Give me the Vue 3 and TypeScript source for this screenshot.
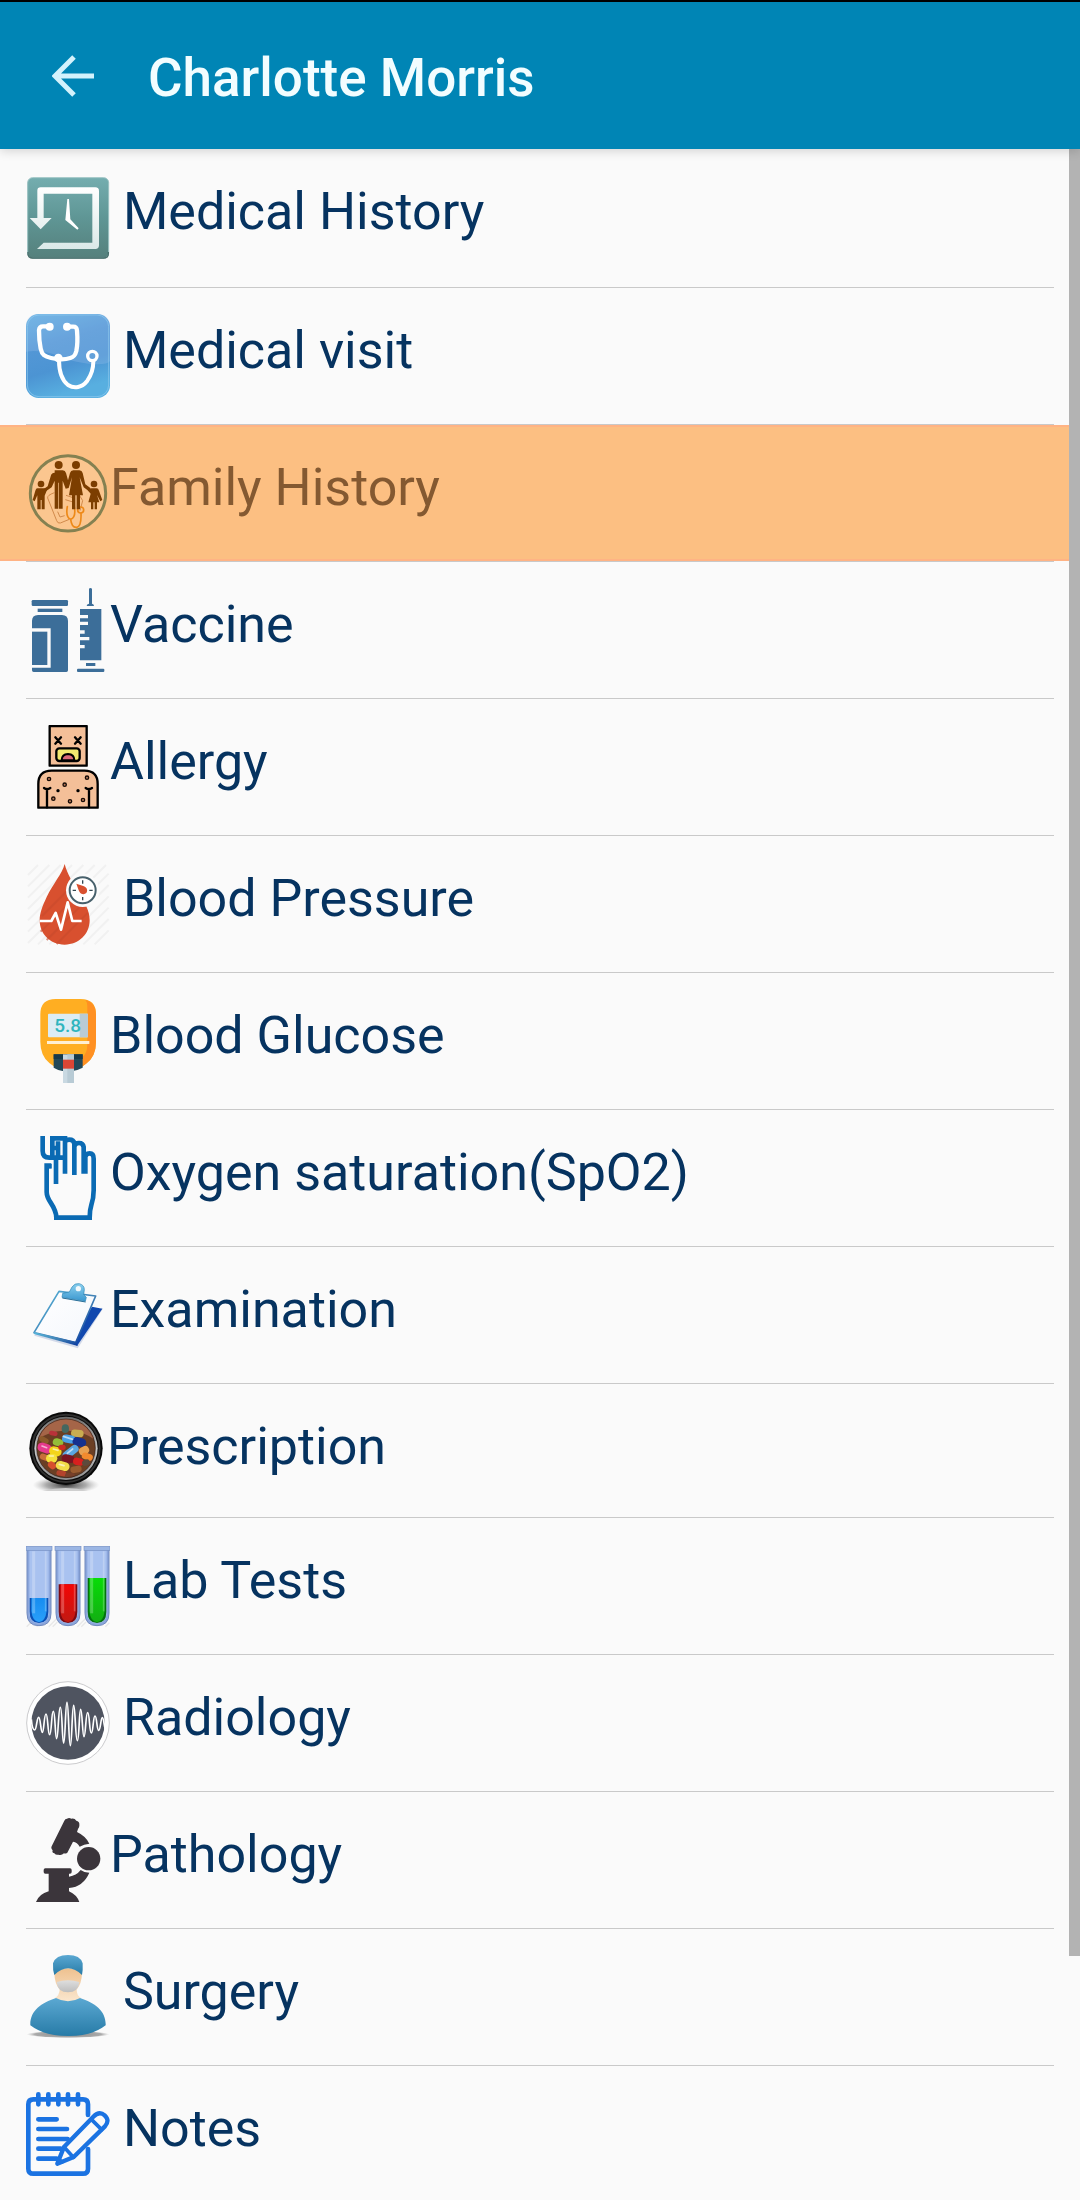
<script setup lang="ts">
import { ref } from 'vue'

interface Section {
  id: string
  label: string
  spaced: boolean
}

const patient = 'Charlotte Morris'

const sections: Section[] = [
  { id: 'history', label: 'Medical History', spaced: true },
  { id: 'visit', label: 'Medical visit', spaced: true },
  { id: 'family', label: 'Family History', spaced: false },
  { id: 'vaccine', label: 'Vaccine', spaced: false },
  { id: 'allergy', label: 'Allergy', spaced: false },
  { id: 'pressure', label: 'Blood Pressure', spaced: true },
  { id: 'glucose', label: 'Blood Glucose', spaced: false },
  { id: 'oxygen', label: 'Oxygen saturation(SpO2)', spaced: false },
  { id: 'exam', label: 'Examination', spaced: false },
  { id: 'prescription', label: 'Prescription', spaced: false },
  { id: 'lab', label: 'Lab Tests', spaced: true },
  { id: 'radiology', label: 'Radiology', spaced: true },
  { id: 'pathology', label: 'Pathology', spaced: false },
  { id: 'surgery', label: 'Surgery', spaced: true },
  { id: 'notes', label: 'Notes', spaced: true }
]

const selected = ref('family')

const tubes = [
  { x: 78, level: 264, fill: 'url(#tube-blue)', dark: '#0b50b4' },
  { x: 165, level: 223, fill: 'url(#tube-red)', dark: '#7d0a12' },
  { x: 252, level: 204, fill: 'url(#tube-green)', dark: '#04700f' }
]

const pills = [
  { x: 160, y: 580, w: 26, h: 14, r: 10, c: '#b8323a' },
  { x: 232, y: 580, w: 38, h: 22, r: 5, c: '#c9ad50' },
  { x: 132, y: 600, w: 30, h: 16, r: 30, c: '#8d5a2c' },
  { x: 196, y: 566, w: 22, h: 26, r: 0, c: '#45675f' },
  { x: 174, y: 607, w: 32, h: 22, r: 15, c: '#93bd3a' },
  { x: 206, y: 597, w: 40, h: 24, r: 10, c: '#4aa0e6' },
  { x: 238, y: 606, w: 42, h: 26, r: 14, c: '#15318f' },
  { x: 134, y: 624, w: 44, h: 28, r: 18, c: '#e63b8d' },
  { x: 166, y: 634, w: 38, h: 28, r: 15, c: '#f3d51c' },
  { x: 252, y: 632, w: 32, h: 24, r: -30, c: '#e8a050' },
  { x: 262, y: 650, w: 34, h: 20, r: 20, c: '#f28a2e' },
  { x: 186, y: 622, w: 22, h: 16, r: 0, c: '#cb2c25' },
  { x: 212, y: 636, w: 54, h: 24, r: -38, c: '#5ba7e2' },
  { x: 134, y: 652, w: 30, h: 18, r: 20, c: '#c8703a' },
  { x: 155, y: 655, w: 34, h: 26, r: 0, c: '#f4e23c' },
  { x: 204, y: 656, w: 38, h: 24, r: 10, c: '#7c1522' },
  { x: 235, y: 665, w: 32, h: 22, r: 12, c: '#d8201e' },
  { x: 258, y: 668, w: 24, h: 18, r: -20, c: '#5d4a3c' },
  { x: 156, y: 676, w: 26, h: 20, r: 40, c: '#d8502d' },
  { x: 188, y: 678, w: 42, h: 26, r: 15, c: '#f2dc4a' },
  { x: 228, y: 688, w: 34, h: 20, r: -10, c: '#9a5c30' },
  { x: 184, y: 700, w: 30, h: 16, r: 10, c: '#b3432c' },
  { x: 210, y: 706, w: 30, h: 14, r: 0, c: '#77402a' }
]

const rashRings = [
  [147, 237], [261, 233], [194, 254], [160, 296], [210, 304], [249, 300]
]
</script>

<template>
  <div class="screen">
    <header class="bar">
      <button class="back" type="button" aria-label="Back">
        <svg class="back-icon" viewBox="0 0 42 42" aria-hidden="true">
          <path d="M22 2 3 21l19 19M4 21h38" fill="none" stroke="#d3f2fc" stroke-width="5" />
        </svg>
      </button>
      <h1 class="title">{{ patient }}</h1>
    </header>

    <main class="body">
      <ul class="list">
        <li v-for="s in sections" :key="s.id" class="item">
          <button
            type="button"
            class="row"
            :class="{ active: selected === s.id }"
            @click="selected = s.id"
          >
            <svg v-if="s.id === 'history'" class="icon" viewBox="78 45 252 252" aria-hidden="true">
              <defs>
                <linearGradient id="hist-bg" x1="0" y1="0" x2="0" y2="1">
                  <stop offset="0" stop-color="#74adaf" />
                  <stop offset=".5" stop-color="#5f9695" />
                  <stop offset="1" stop-color="#55807c" />
                </linearGradient>
                <linearGradient id="hist-line" x1="0" y1="0" x2="0" y2="1">
                  <stop offset="0" stop-color="#fff" />
                  <stop offset="1" stop-color="#dbe9e8" />
                </linearGradient>
              </defs>
              <rect x="82" y="56" width="245" height="241" rx="16" fill="#9aa5a4" />
              <rect x="83" y="53" width="243" height="241" rx="15" fill="url(#hist-bg)" stroke="#9fc6c7" stroke-width="3" />
              <path d="M84 276v4q0 14 14 14h213q14 0 14-14v-4" fill="none" stroke="#4a706d" stroke-width="4" />
              <path d="M112 174V92q0-10 10-10h164q11 0 11 11v163q0 11-11 11H111l20-19h146V101H131v73h24l-33 34-33-34z" fill="url(#hist-line)" />
              <path d="M202 117h5l4 61 25 27-4 4-36-29z" fill="#fff" />
            </svg>

            <svg v-else-if="s.id === 'visit'" class="icon" viewBox="78 462 252 252" aria-hidden="true">
              <defs>
                <linearGradient id="visit-bg" x1="0" y1="0" x2=".3" y2="1">
                  <stop offset="0" stop-color="#64b1e2" />
                  <stop offset=".4" stop-color="#5397d6" />
                  <stop offset=".7" stop-color="#4c94d3" />
                  <stop offset="1" stop-color="#58afe0" />
                </linearGradient>
              </defs>
              <rect x="78" y="462" width="252" height="252" rx="38" fill="url(#visit-bg)" />
              <path d="M78 575V500q0-38 38-38h176q38 0 38 38v104q-10 12-60 8-60-8-95-24-50-20-97-13z" fill="#a8c8ee" opacity=".25" />
              <rect x="82" y="465" width="244" height="245" rx="35" fill="none" stroke="#8fcaf0" stroke-width="3" opacity=".7" />
              <g fill="none" stroke="#fff" stroke-width="13" stroke-linecap="round" stroke-linejoin="round">
                <path d="M148 499h-19q-11 0-12 12c0 27 2 41 5 55 4 19 12 24 31 28 26 6 40 6 58 0 12-4 15-9 18-21 4-18 4-36 2-61-1-10-4-12-11-12h-16" />
                <path d="M177 600c0 35 8 60 27 75 19 12 42 8 58-13 13-18 18-32 18-58" stroke-width="12" />
                <circle cx="277" cy="588" r="14" stroke-width="10" />
              </g>
              <circle cx="149" cy="500" r="12" fill="#fff" />
              <circle cx="201" cy="500" r="12" fill="#fff" />
              <circle cx="175" cy="594" r="13" fill="#fff" />
            </svg>

            <svg v-else-if="s.id === 'family'" class="icon" viewBox="78 93 252 252" aria-hidden="true">
              <circle cx="204" cy="220" r="113" fill="#fbc68f" stroke="#858151" stroke-width="9" />
              <g fill="none" stroke="#d18a4c" stroke-width="3" stroke-linejoin="round">
                <path d="M163 218q-22 8-20 16l27 68q3 9 11 7l27-11M173 275l7 16 14-4M198 226l24 8M196 239l23 7M236 222l12 20-8 30" />
              </g>
              <g fill="none" stroke="#ed8918" stroke-width="5" stroke-linecap="round">
                <path d="M202 260c-4 22 0 34 10 38 12-4 14-20 11-37M212 298c2 16 8 25 18 24 12-2 14-18 13-42" />
                <circle cx="242" cy="270" r="9" />
              </g>
              <g fill="#7c3e00">
                <circle cx="176" cy="135" r="12" />
                <circle cx="228" cy="135" r="12" />
                <circle cx="123" cy="192" r="10" />
                <circle cx="282" cy="192" r="10" />
                <path d="M164 151h24q8 0 10 8l6 22 6-22q2-8 10-8h18q8 0 10 8l8 34 15 11 3 7-5 4-18-13-12-30 10 54h-9v42h-10v-42h-4v42h-10v-42h-9l9-54-10 32-9 2-9-24v84h-11v-78h-2v78h-11v-84l-9 20-24 16-5-7 17-12 10-33q2-8 11-8z" />
                <path d="M112 205h22q4 0 7 5l-7 17v41h-9v-28h-3v28h-10v-42l-8 18-6-4 8-28q2-7 6-7zM274 205h16q5 0 7 7l10 28-6 4-10-19 7 22h-7v21h-7v-21h-4v21h-7v-21h-8l7-26-9-10z" />
              </g>
            </svg>

            <svg v-else-if="s.id === 'vaccine'" class="icon" viewBox="78 504 252 252" aria-hidden="true">
              <g fill="#3c6e99">
                <rect x="95" y="540" width="109" height="18" rx="4" />
                <rect x="113" y="566" width="74" height="10" />
                <path d="M96 625v-22q0-18 18-18h72q18 0 18 18v148q0 5-5 5h-98q-5 0-5-5v-8h56V625z" />
                <path d="M96 635h46v100H96z" />
                <path d="M267 506q4-4 9 0v45q6 1 6 7h-22q0-6 7-7z" />
                <path d="M240 567h64v154h-64v-36h14v-10h-14v-14h28v-10h-28v-10h14v-10h-14v-16h24v-10h-24v-10h24v-10h-24z" />
                <rect x="258" y="729" width="28" height="9" />
                <rect x="231" y="746" width="82" height="10" rx="3" />
              </g>
            </svg>

            <svg v-else-if="s.id === 'allergy'" class="icon" viewBox="78 75 252 252" aria-hidden="true">
              <g fill="#f4bf98" stroke="#000" stroke-width="7" stroke-linejoin="round">
                <path d="M149 78h111v119H149z" />
                <path d="M115 323v-71q0-40 40-40h98q40 0 40 40v71z" />
              </g>
              <g fill="none" stroke="#000" stroke-width="7" stroke-linecap="round">
                <path d="M166 112l17 19M183 112l-17 19M225 112l17 19M242 112l-17 19" />
                <path d="M141 322v-55M132 264q9 7 19 0M267 322v-55M257 264q9 7 19 0" />
              </g>
              <rect x="169" y="145" width="70" height="38" rx="9" fill="#f3e96f" stroke="#000" stroke-width="7" />
              <path d="M185 181q0-18 19-19 19 1 19 19z" fill="#dc6878" stroke="#000" stroke-width="6" />
              <circle v-for="(p, i) in rashRings" :key="i" :cx="p[0]" :cy="p[1]" r="5" fill="#b8795a" stroke="#150a05" stroke-width="4" />
              <circle cx="174" cy="272" r="5" />
              <circle cx="234" cy="272" r="5" />
            </svg>

            <svg v-else-if="s.id === 'pressure'" class="icon" viewBox="78 486 252 252" aria-hidden="true">
              <path d="M84 525l30-30M84 559l64-64M84 593l98-98M84 627l132-132M84 661l166-166M84 695l200-200M84 729l234-234M114 733l212-212M148 733l178-178M182 733l144-144M216 733l110-110M250 733l76-76M284 733l42-42" stroke="#f1f1f1" stroke-width="6" />
              <path d="M194 492c7 28 24 55 42 86 17 30 33 51 33 83 0 41-32 73-75 73s-75-32-75-73c0-22 8-42 21-70 20-42 46-68 54-99z" fill="#d8502f" />
              <path d="M140 720l98-98M170 732l94-94M122 695l70-70M126 648l84-84" stroke="#c94b2d" stroke-width="6" opacity=".6" />
              <circle cx="248" cy="571" r="50" fill="#fbfbfb" />
              <circle cx="248" cy="571" r="39" fill="#fff" stroke="#47606b" stroke-width="6" />
              <path d="M248 541v10M248 591v10M218 571h10M268 571h10" stroke="#344852" stroke-width="4" />
              <path d="M229 551l23 8c16 7 10 27-5 23-8-1-10-9-18-31z" fill="#d8502f" />
              <path d="M119 663h35l13-24 16 50 20-82 14 56h28" fill="none" stroke="#fff" stroke-width="8" stroke-linejoin="round" />
            </svg>

            <svg v-else-if="s.id === 'glucose'" class="icon" viewBox="78 87 252 252" aria-hidden="true">
              <path d="M121 133q0-46 46-46h75q46 0 46 46v82q0 42-27 64-26 22-56 22-32 0-57-22-27-22-27-64z" fill="#ffae22" />
              <path d="M256 89q32 9 32 44v82q0 45-30 66l-12 9V262q16-10 16-40V110q0-14-6-21z" fill="#ff9022" />
              <rect x="144" y="131" width="120" height="71" rx="3" fill="#dcecf3" />
              <path d="M239 131h25v71h-25z" fill="#b9cbd4" />
              <text class="reading" x="203" y="186" text-anchor="middle">5.8</text>
              <rect x="141" y="213" width="127" height="9" fill="#ffefd2" />
              <path d="M161 253h87v40q-18 9-30 10h-30q-12-1-27-10z" fill="#224858" />
              <path d="M161 253h87v14h-87z" fill="#17394a" />
              <path d="M189 253h33v86h-33z" fill="#c9d9e2" />
              <path d="M202 253h20v86h-20z" fill="#b8cbd5" />
              <path d="M189 269h33v27h-33z" fill="#db4635" />
            </svg>

            <svg v-else-if="s.id === 'oxygen'" class="icon" viewBox="78 498 252 252" aria-hidden="true">
              <path d="M128 498v45q0 20 20 20h50M157 498v64M157 505h45M174 514v48M161 534h13M154 587h-14v79q0 14 12 32 17 26 17 45h100q0-23 5-38 7-20 7-44V566q0-16-12-16-13 0-13 12v49M168 642v-75M195 611V512M195 516q2-7 13-7 13 0 15 12v94M223 530q2-11 14-11t14 12v80" fill="none" stroke="#0a6ab3" stroke-width="14" />
              <path d="M135 582h20v14h-20z" fill="#0a6ab3" />
            </svg>

            <svg v-else-if="s.id === 'exam'" class="icon" viewBox="78 99 252 252" aria-hidden="true">
              <defs>
                <linearGradient id="exam-edge" x1="0" y1="0" x2="1" y2="1">
                  <stop offset="0" stop-color="#58b9dd" />
                  <stop offset=".55" stop-color="#3f7fb4" />
                  <stop offset="1" stop-color="#07369c" />
                </linearGradient>
                <linearGradient id="exam-clip" x1="0" y1="0" x2="0" y2="1">
                  <stop offset="0" stop-color="#8bd0ee" />
                  <stop offset="1" stop-color="#3a97cf" />
                </linearGradient>
                <linearGradient id="exam-page" x1="0" y1="0" x2="1" y2="1">
                  <stop offset="0" stop-color="#fff" />
                  <stop offset="1" stop-color="#f4f7fc" />
                </linearGradient>
              </defs>
              <path d="M104 284l128 37 74-116" fill="none" stroke="#b7c3de" stroke-width="6" opacity=".6" />
              <path d="M276 200l31 6-76 112-14-20z" fill="#1148ae" />
              <path d="M177 154l110 14-60 140-125-30z" fill="url(#exam-page)" stroke="url(#exam-edge)" stroke-width="5" stroke-linejoin="round" />
              <path d="M102 277l126 29 5 12-131-36z" fill="url(#exam-edge)" />
              <path d="M188 160l20-4 8-15q8-12 22-10 15 4 15 18l-2 15 8 8-3 12-70-12z" fill="url(#exam-clip)" stroke="#2e88b7" stroke-width="2" />
              <circle cx="235" cy="146" r="8" fill="#f3f9fc" />
              <path d="M187 174l70 12" stroke="#286f99" stroke-width="3" />
            </svg>

            <svg v-else-if="s.id === 'prescription'" class="icon small" viewBox="78 510 243 243" aria-hidden="true">
              <defs>
                <radialGradient id="rx-shadow">
                  <stop offset="0" stop-color="#222" stop-opacity=".9" />
                  <stop offset=".6" stop-color="#777" stop-opacity=".6" />
                  <stop offset="1" stop-color="#aaa" stop-opacity="0" />
                </radialGradient>
                <linearGradient id="rx-rim" x1="0" y1="0" x2="0" y2="1">
                  <stop offset="0" stop-color="#6a6a6a" />
                  <stop offset=".5" stop-color="#c9c9c9" />
                  <stop offset="1" stop-color="#8d8d8d" />
                </linearGradient>
                <clipPath id="rx-lens"><circle cx="198" cy="625" r="89" /></clipPath>
              </defs>
              <ellipse cx="198" cy="735" rx="100" ry="26" fill="url(#rx-shadow)" />
              <path d="M128 753q70-18 136 0z" fill="#cfcfcf" />
              <circle cx="198" cy="625" r="110" fill="#080808" />
              <circle cx="198" cy="625" r="101" fill="none" stroke="#303030" stroke-width="6" />
              <circle cx="198" cy="625" r="95" fill="url(#rx-rim)" />
              <circle cx="198" cy="625" r="88" fill="#6b3f24" />
              <g clip-path="url(#rx-lens)">
                <path d="M110 600q10-65 88-65t88 65q-40-30-88-28-50 0-88 28z" fill="#a56548" />
                <rect
                  v-for="(p, i) in pills"
                  :key="i"
                  :x="p.x - p.w / 2"
                  :y="p.y - p.h / 2"
                  :width="p.w"
                  :height="p.h"
                  :rx="p.h / 2"
                  :fill="p.c"
                  :transform="`rotate(${p.r} ${p.x} ${p.y})`"
                />
                <path d="M190 589l28 9M126 618l14 5M202 640l16-13M160 627l14 4M148 648h12M178 673l14 4" stroke="#fff" stroke-width="5" stroke-linecap="round" opacity=".6" />
              </g>
              <circle cx="198" cy="625" r="88" fill="none" stroke="#2a1712" stroke-width="3" opacity=".6" />
            </svg>

            <svg v-else-if="s.id === 'lab'" class="icon" viewBox="78 102 252 252" aria-hidden="true">
              <defs>
                <linearGradient id="tube-blue" x1="0" y1="0" x2="0" y2="1">
                  <stop offset="0" stop-color="#168cf0" />
                  <stop offset="1" stop-color="#2aa0fa" />
                </linearGradient>
                <linearGradient id="tube-red" x1="0" y1="0" x2="0" y2="1">
                  <stop offset="0" stop-color="#f40505" />
                  <stop offset="1" stop-color="#c01a12" />
                </linearGradient>
                <linearGradient id="tube-green" x1="0" y1="0" x2="0" y2="1">
                  <stop offset="0" stop-color="#07dc07" />
                  <stop offset="1" stop-color="#13ae13" />
                </linearGradient>
              </defs>
              <path d="M80 350l12-12M110 350l10-10M146 350l24-24M158 350l14-14M232 350l24-24M244 350l14-14M316 350l12-12" stroke="#e8e8e8" stroke-width="4" />
              <g v-for="t in tubes" :key="t.x">
                <path :d="`M${t.x + 3} 120h72v190q0 37-36 37t-36-37z`" fill="#8ba6dc" />
                <path :d="`M${t.x + 10} 120h58v186q0 34-29 34t-29-34z`" fill="#a9c2f0" />
                <path :d="`M${t.x + 11} ${t.level}h56V306q0 33-28 33t-28-33z`" :fill="t.dark" />
                <path :d="`M${t.x + 16} ${t.level}h46V303q-4 32-23 34-19-2-23-34z`" :fill="t.fill" />
                <path :d="`M${t.x + 23} 124V310`" stroke="#fff" stroke-width="9" opacity=".24" />
                <path :d="`M${t.x + 59} 124V304`" stroke="#fff" stroke-width="5" opacity=".24" />
                <path :d="`M${t.x + 3} 120v190q0 37 36 37t36-37V120`" fill="none" stroke="#7189bd" stroke-width="3" />
                <rect :x="t.x" y="109" width="78" height="12" fill="#9bb6e4" stroke="#7690c4" stroke-width="2" />
              </g>
            </svg>

            <svg v-else-if="s.id === 'radiology'" class="icon" viewBox="78 513 252 252" aria-hidden="true">
              <circle cx="204" cy="639" r="124" fill="#fff" stroke="#cbcbcd" stroke-width="3" />
              <circle cx="204" cy="639" r="110" fill="#4f5460" />
              <path d="M94 628q3 32 10 32c6 0 6-38 12-38s6 45 11 45 5-55 11-55 5 62 11 62 5-70 11-70 5 82 10 82 5-94 11-94 5 107 10 107 5-122 10-122 5 130 10 130 5-121 10-121 5 106 11 106 5-94 10-94 5 82 10 82 5-72 11-72 5 61 11 61 5-51 11-51 5 43 11 43 6-38 11-38 6 38 11 38" fill="none" stroke="#fff" stroke-width="5" />
            </svg>

            <svg v-else-if="s.id === 'pathology'" class="icon" viewBox="78 84 252 252" aria-hidden="true">
              <g fill="#3b353b">
                <path d="M193 92q2-6 8-6 6-4 13 0 10-2 15 6 10 2 9 12 1 7-4 13l-3 9q26 12 37 35-16 1-29 9-7-14-20-15l-17 33q-6 4-10 2-8 8-17 4-7 2-12-4-8-1-5-9-6-5-3-12z" />
                <circle cx="266" cy="206" r="35" />
                <path d="M131 240q0-5 5-5h74q5 0 5 5v6q0 5-5 5h-3v9q22-3 35-20 10 8 26 8-18 42-61 46v10q23 10 31 32H108q9-24 38-32v-53h-10q-5 0-5-5z" />
              </g>
            </svg>

            <svg v-else-if="s.id === 'surgery'" class="icon" viewBox="78 495 252 252" aria-hidden="true">
              <defs>
                <linearGradient id="scrub" x1="0" y1="0" x2="0" y2="1">
                  <stop offset="0" stop-color="#5ba8d2" />
                  <stop offset="1" stop-color="#277ba7" />
                </linearGradient>
                <linearGradient id="skin" x1="0" y1="0" x2="0" y2="1">
                  <stop offset="0" stop-color="#eec18f" />
                  <stop offset="1" stop-color="#fbe8d1" />
                </linearGradient>
                <linearGradient id="mask" x1="0" y1="0" x2="0" y2="1">
                  <stop offset="0" stop-color="#dedede" />
                  <stop offset="1" stop-color="#bdbdbd" />
                </linearGradient>
                <radialGradient id="floor">
                  <stop offset="0" stop-color="#888" />
                  <stop offset=".8" stop-color="#aaa" />
                  <stop offset="1" stop-color="#ccc" stop-opacity="0" />
                </radialGradient>
              </defs>
              <ellipse cx="204" cy="733" rx="125" ry="11" fill="url(#floor)" />
              <path d="M163 550q40-30 83 0-1 32-16 49 0 17 13 25-9 15-39 14-31 1-39-14 13-8 14-25-15-17-16-49z" fill="url(#skin)" />
              <path d="M159 520q8-25 45-25t44 25q1 20-2 35-42-40-83 0-5-15-4-35z" fill="url(#scrub)" />
              <path d="M170 576q34-10 68 0-3 31-34 31t-34-31z" fill="url(#mask)" />
              <path d="M168 624q36 20 72 0c45 14 79 40 77 82q-42 33-113 32-72 0-113-32c-2-42 32-68 77-82z" fill="url(#scrub)" />
            </svg>

            <svg v-else class="icon" viewBox="78 906 252 252" aria-hidden="true">
              <g fill="none" stroke="#1b73e2" stroke-width="14" stroke-linejoin="round" stroke-linecap="round">
                <path d="M264 975v-32q0-15-15-15H100q-15 0-15 15v193q0 15 15 15h149q15 0 15-15v-59" />
                <path d="M115 913v30M145 913v30M175 913v30M204 913v30M234 913v30" />
                <path d="M115 988h55M115 1017h86M115 1047h88M115 1076h67M115 1106h55" />
                <path d="M192 1071l88-91q18-18 34-4 17 16 0 34l-93 91-49 20z" fill="#fafafa" stroke-width="13" />
                <path d="M192 1071l28 31M274 988l31 31M176 1108l10 8" stroke-width="11" />
              </g>
            </svg>

            <span class="label"><template v-if="s.spaced">&nbsp;</template>{{ s.label }}</span>
          </button>
        </li>
      </ul>
      <div class="thumb" aria-hidden="true"></div>
    </main>
  </div>
</template>

<style>
body {
  margin: 0;
  background: #fafafa;
}
</style>

<style scoped>
.screen {
  display: flex;
  flex-direction: column;
  min-height: 100vh;
  font-family: Roboto, 'Liberation Sans', sans-serif;
  background: #fafafa;
}

.bar {
  position: relative;
  z-index: 1;
  display: flex;
  flex: none;
  align-items: center;
  box-sizing: border-box;
  height: 149px;
  padding: 0 52px;
  gap: 54px;
  border-top: 2px solid #000;
  background: #0085b5;
  box-shadow: 0 2px 10px rgba(0, 0, 0, 0.16);
}

.back {
  display: flex;
  padding: 0;
  border: 0;
  background: none;
  cursor: pointer;
}

.back-icon {
  width: 42px;
  height: 42px;
}

.title {
  margin: 0;
  padding-top: 4px;
  font-size: 53px;
  font-weight: 500;
  line-height: 62px;
  color: #f2fdff;
}

.body {
  position: relative;
  flex: 1;
}

.list {
  margin: 0 10px 0 0;
  padding: 0;
  list-style: none;
}

.item::after {
  content: '';
  display: block;
  height: 1px;
  margin: 0 16px 0 26px;
  background: #c9c9c9;
}

.row {
  display: flex;
  align-items: flex-start;
  box-sizing: border-box;
  width: 100%;
  padding: 26px;
  border: 0;
  background: none;
  font: inherit;
  color: #063360;
  text-align: left;
  cursor: pointer;
}

.item:first-child .row {
  padding-bottom: 28px;
}

.item:last-child .row {
  padding-bottom: 24px;
}

.item:last-child::after {
  display: none;
}

.row.active {
  background: #fcbf82;
  box-shadow: inset 0 2px #ffb384, inset 0 -2px #ffb384;
  color: #845931;
}

.icon {
  flex: none;
  width: 84px;
  height: 84px;
}

.icon.small {
  width: 81px;
  height: 81px;
}

.label {
  padding-top: 6px;
  font-size: 52px;
  line-height: 62px;
  white-space: nowrap;
}

.reading {
  font-size: 57px;
  font-weight: 500;
  fill: #2fb5bd;
}

.thumb {
  position: absolute;
  top: 0;
  right: 0;
  width: 11px;
  height: 88.1%;
  background: #b3b3b3;
}
</style>
